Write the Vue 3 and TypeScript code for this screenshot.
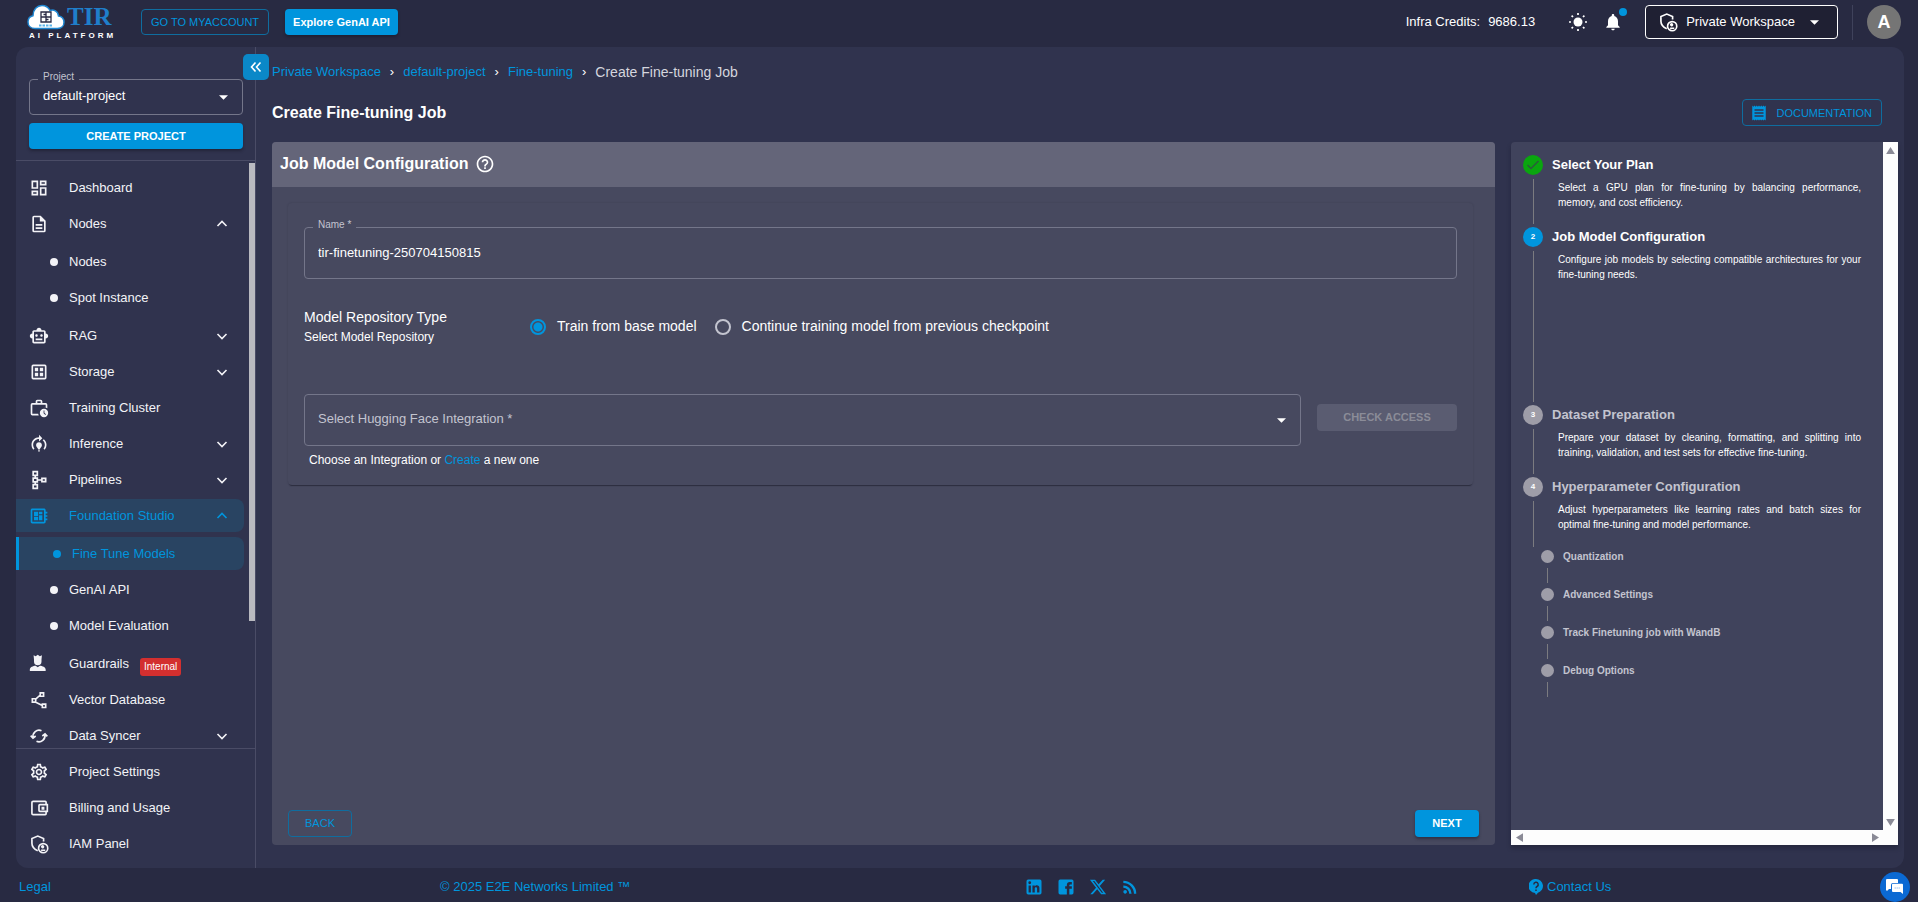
<script setup lang="ts">
import { ref } from 'vue'

interface Icon {
  d: string
  stroke?: boolean
}

interface NavItem {
  label: string
  icon: string
  expandable?: boolean
  open?: boolean
  active?: boolean
  badge?: string
  children?: { label: string; active?: boolean }[]
}

const icons: Record<string, Icon> = {
  dashboard: { d: 'M19 5v2h-4V5h4M9 5v6H5V5h4m10 8v6h-4v-6h4M9 17v2H5v-2h4M21 3h-8v6h8V3M11 3H3v10h8V3m10 8h-8v10h8V11m-10 4H3v6h8v-6z' },
  file: { d: 'M6 2a2 2 0 0 0-2 2v16a2 2 0 0 0 2 2h12a2 2 0 0 0 2-2V8l-6-6H6m0 2h7v5h5v11H6V4m2 8v2h8v-2H8m0 4v2h8v-2H8z' },
  robot: { d: 'M20 9V7c0-1.1-.9-2-2-2h-3c0-1.66-1.34-3-3-3S9 3.34 9 5H6c-1.1 0-2 .9-2 2v2c-1.66 0-3 1.34-3 3s1.34 3 3 3v4c0 1.1.9 2 2 2h12c1.1 0 2-.9 2-2v-4c1.66 0 3-1.34 3-3s-1.34-3-3-3zm-2 10H6V7h12v12zm-9-6c-.83 0-1.5-.67-1.5-1.5S8.17 10 9 10s1.5.67 1.5 1.5S9.83 13 9 13zm7.5-1.5c0 .83-.67 1.5-1.5 1.5s-1.5-.67-1.5-1.5.67-1.5 1.5-1.5 1.5.67 1.5 1.5zM8 15h8v2H8v-2z' },
  storage: { d: 'M19 3H5a2 2 0 0 0-2 2v14a2 2 0 0 0 2 2h14a2 2 0 0 0 2-2V5a2 2 0 0 0-2-2m0 16H5V5h14v14M7 7h4v4H7V7m6 0h4v4h-4V7m-6 6h4v4H7v-4m6 0h4v4h-4v-4z' },
  cluster: { d: 'M18 11c1.5 0 3 .5 4 1.300V8a2 2 0 0 0-2-2h-4V4a2 2 0 0 0-2-2h-4a2 2 0 0 0-2 2v2H4a2 2 0 0 0-2 2v11a2 2 0 0 0 2 2h7.700a7 7 0 0 1-.700-2H4V8h16v3.300a7 7 0 0 0-2-.300M10 4h4v2h-4V4m8 9a5 5 0 1 0 0 10 5 5 0 0 0 0-10m1.650 7.350L17.500 18.200V15h1v2.790l1.850 1.850-.700.710z' },
  inference: { d: 'M15.500 13.500c0 2-2.500 3.500-2.500 5h-2c0-1.500-2.500-3-2.500-5 0-1.930 1.570-3.500 3.500-3.500s3.500 1.570 3.500 3.500zm-2.500 6h-2V21h2v-1.500zM19 13c0 1.680-.590 3.210-1.580 4.420l1.420 1.420C20.180 17.270 21 15.230 21 13c0-2.740-1.230-5.190-3.160-6.840l-1.420 1.420C17.990 8.860 19 10.820 19 13zm-3-8l-4-4v3c-4.970 0-9 4.030-9 9 0 2.230.820 4.270 2.160 5.840l1.420-1.420C5.590 16.210 5 14.680 5 13c0-3.860 3.140-7 7-7v3l4-4z' },
  pipelines: { d: 'M5 2h5v4.500H5zM5 9.750h5v4.500H5zM5 17.500h5V22H5zM15.500 10h4.500v4h-4.500zM7.500 6.500v3.250M7.500 14.250v3.250M10 12h5.500', stroke: true },
  studio: { d: 'M22 9V7h-2V5c0-1.100-.900-2-2-2H4c-1.100 0-2 .900-2 2v14c0 1.100.900 2 2 2h14c1.100 0 2-.900 2-2v-2h2v-2h-2v-2h2v-2h-2V9h2zm-4 10H4V5h14v14zM6 13h5v4H6zm6-6h4v3h-4zM6 7h5v5H6zm6 4h4v6h-4z' },
  guard: { d: 'M5.500 1.500L8 2.700 10.500 1l2.500 1.700 2.500-1.200-.500 5V9a4.500 4.500 0 0 1-9 0V6.500zM1 20.500v-2c0-2.800 4-4.300 7-4.500l2.500 2 2.500-2c3 .200 7 1.700 7 4.500v2z' },
  vector: { d: 'M13.500 3.500h4v4h-4zM4 10.500h4v4H4zM16 17h4v4h-4zM13.500 6L8 11M7.500 14.500l8.500 4', stroke: true },
  sync: { d: 'M5 14a7.300 7.300 0 0 1 10-8.300M19 10a7.300 7.300 0 0 1-10 8.300M2 11.500L4.800 14.500 8 12M22 12.500l-2.800-3L16 12', stroke: true },
  gear: { d: 'M19.430 12.980c.040-.320.070-.640.070-.980 0-.340-.030-.660-.070-.980l2.110-1.650c.190-.150.240-.420.120-.640l-2-3.460c-.090-.160-.260-.250-.440-.250-.060 0-.120.010-.170.030l-2.490 1c-.520-.400-1.080-.730-1.690-.980l-.380-2.650C14.460 2.180 14.250 2 14 2h-4c-.250 0-.460.180-.490.420l-.380 2.650c-.610.250-1.170.590-1.690.980l-2.490-1c-.060-.020-.120-.030-.180-.030-.170 0-.340.090-.430.250l-2 3.460c-.130.220-.070.490.120.640l2.110 1.650c-.040.320-.070.650-.070.980 0 .330.030.660.070.980l-2.110 1.650c-.190.150-.240.420-.120.640l2 3.460c.090.160.260.250.440.250.060 0 .120-.010.170-.030l2.490-1c.520.400 1.080.730 1.690.980l.380 2.650c.030.240.240.420.490.420h4c.250 0 .460-.180.490-.420l.380-2.650c.610-.250 1.170-.590 1.690-.980l2.490 1c.060.020.120.030.180.030.170 0 .340-.090.430-.250l2-3.460c.120-.220.070-.490-.120-.640l-2.110-1.650zm-1.980-1.710c.040.310.050.520.050.730 0 .210-.020.430-.050.730l-.140 1.130.890.700 1.080.840-.700 1.210-1.270-.510-1.040-.420-.900.680c-.430.320-.840.560-1.250.730l-1.060.430-.160 1.130-.200 1.350h-1.400l-.190-1.350-.160-1.130-1.060-.430c-.430-.180-.830-.410-1.230-.710l-.910-.700-1.060.430-1.270.510-.700-1.210 1.080-.840.890-.700-.140-1.130c-.030-.310-.050-.540-.050-.740s.020-.430.050-.730l.140-1.130-.890-.700-1.080-.840.700-1.210 1.270.510 1.040.420.900-.680c.430-.320.840-.560 1.250-.730l1.060-.430.160-1.130.200-1.350h1.390l.190 1.350.160 1.130 1.060.430c.430.180.830.410 1.230.710l.910.700 1.060-.430 1.270-.510.700 1.210-1.070.850-.890.700.140 1.130zM12 8c-2.210 0-4 1.790-4 4s1.790 4 4 4 4-1.790 4-4-1.790-4-4-4zm0 6c-1.100 0-2-.900-2-2s.900-2 2-2 2 .900 2 2-.900 2-2 2z' },
  wallet: { d: 'M20.500 7V5a1 1 0 0 0-1-1H5a1.500 1.500 0 0 0-1.500 1.500v13A1.500 1.500 0 0 0 5 20h14.500a1 1 0 0 0 1-1v-2M13 8h9v8h-9a1 1 0 0 1-1-1V9a1 1 0 0 1 1-1zM16 11.500h1.500v1.500H16z', stroke: true },
  shield: { d: 'M10.500 20C6 18 3.500 14.500 3.500 11V5.500L10.500 2.500l7 3V9M17 11.500a5.500 5.500 0 1 0 0 11 5.500 5.500 0 0 0 0-11zM17 14.500a1 1 0 1 0 0 1.500 1 1 0 0 0 0-1.500zM14.500 19.500h5', stroke: true },
}

const nav: NavItem[] = [
  { label: 'Dashboard', icon: 'dashboard' },
  { label: 'Nodes', icon: 'file', expandable: true, open: true, children: [{ label: 'Nodes' }, { label: 'Spot Instance' }] },
  { label: 'RAG', icon: 'robot', expandable: true },
  { label: 'Storage', icon: 'storage', expandable: true },
  { label: 'Training Cluster', icon: 'cluster' },
  { label: 'Inference', icon: 'inference', expandable: true },
  { label: 'Pipelines', icon: 'pipelines', expandable: true },
  {
    label: 'Foundation Studio', icon: 'studio', expandable: true, open: true, active: true,
    children: [{ label: 'Fine Tune Models', active: true }, { label: 'GenAI API' }, { label: 'Model Evaluation' }],
  },
  { label: 'Guardrails', icon: 'guard', badge: 'Internal' },
  { label: 'Vector Database', icon: 'vector' },
  { label: 'Data Syncer', icon: 'sync', expandable: true },
]

const bottomNav: NavItem[] = [
  { label: 'Project Settings', icon: 'gear' },
  { label: 'Billing and Usage', icon: 'wallet' },
  { label: 'IAM Panel', icon: 'shield' },
]

const steps = [
  { title: 'Select Your Plan', text: 'Select a GPU plan for fine-tuning by balancing performance, memory, and cost efficiency.', state: 'done' },
  { title: 'Job Model Configuration', text: 'Configure job models by selecting compatible architectures for your fine-tuning needs.', state: 'current' },
  { title: 'Dataset Preparation', text: 'Prepare your dataset by cleaning, formatting, and splitting into training, validation, and test sets for effective fine-tuning.', state: 'todo' },
  { title: 'Hyperparameter Configuration', text: 'Adjust hyperparameters like learning rates and batch sizes for optimal fine-tuning and model performance.', state: 'todo' },
]
const subSteps = ['Quantization', 'Advanced Settings', 'Track Finetuning job with WandB', 'Debug Options']

const socials = [
  { name: 'LinkedIn', d: 'M19 3a2 2 0 0 1 2 2v14a2 2 0 0 1-2 2H5a2 2 0 0 1-2-2V5a2 2 0 0 1 2-2h14m-.500 15.500v-5.300a3.260 3.260 0 0 0-3.260-3.260c-.850 0-1.840.520-2.320 1.300v-1.110h-2.790v8.370h2.790v-4.930c0-.770.620-1.400 1.390-1.400a1.400 1.400 0 0 1 1.400 1.400v4.930h2.790M6.880 8.560a1.680 1.680 0 0 0 1.680-1.680c0-.930-.750-1.690-1.680-1.690a1.690 1.690 0 0 0-1.690 1.690c0 .930.760 1.680 1.690 1.680m1.390 9.940v-8.370H5.500v8.370h2.770z' },
  { name: 'Facebook', d: 'M19 3H5a2 2 0 0 0-2 2v14a2 2 0 0 0 2 2h8v-7h-2v-3h2V9.500C13 7.500 14.300 6 16.500 6H19v3h-2c-.600 0-1 .400-1 1v1h3v3h-3v7h3a2 2 0 0 0 2-2V5a2 2 0 0 0-2-2z' },
  { name: 'X', d: 'M18.244 2.250h3.308l-7.227 8.260 8.502 11.240H16.170l-5.214-6.817L4.990 21.750H1.680l7.730-8.835L1.254 2.250H8.080l4.713 6.231zm-1.161 17.520h1.833L7.084 4.126H5.117z' },
  { name: 'RSS', d: 'M6.180 15.640a2.180 2.180 0 0 1 2.180 2.180C8.360 19 7.380 20 6.180 20 5 20 4 19 4 17.820a2.180 2.180 0 0 1 2.180-2.180M4 4.440A15.560 15.560 0 0 1 19.560 20h-2.830A12.730 12.730 0 0 0 4 7.270V4.440m0 5.660a9.900 9.900 0 0 1 9.900 9.900h-2.830A7.070 7.070 0 0 0 4 12.930V10.100z' },
]

const project = ref('default-project')
const jobName = ref('tir-finetuning-250704150815')
const source = ref('base')
const integration = ref('')
</script>

<template>
  <div class="page">
    <header class="top">
      <a class="logo" href="#" aria-label="TIR AI Platform">
        <span class="logo-row">
          <svg class="cloud" viewBox="0 0 38 26" aria-hidden="true">
            <path d="M8 24.500C3.500 24.500 1 21.500 1 18c0-3.300 2.200-5.800 5-6.300C6 5.500 10 1.500 15 1.500c4 0 6.500 2 8 5 3.500-1.500 8 .500 8.500 5.500 3.500.500 5.500 3 5.500 6.300 0 3.700-2.700 6.200-6.500 6.200z" fill="#fff" stroke="#1f86d0" stroke-width="1.500" />
            <path d="M14 8h10v10H14zM19 8v10M14 13h10M16.500 10.500h2.500M21.500 15.500H19" fill="none" stroke="#2a2b44" stroke-width="1.300" />
            <path d="M12 21.500h14" stroke="#5ab4ea" stroke-width="2" stroke-dasharray="2.500 1" />
          </svg>
          <span class="tir">TIR</span>
        </span>
        <span class="tagline">AI PLATFORM</span>
      </a>
      <button class="btn outline account">GO TO MYACCOUNT</button>
      <button class="btn solid explore">Explore GenAI API</button>
      <div class="top-right">
        <span class="credits">Infra Credits:<span>9686.13</span></span>
        <button class="icon-btn" aria-label="Toggle theme">
          <svg viewBox="0 0 20 20" width="20" height="20"><circle cx="10" cy="10" r="4.500" fill="currentColor" /><path d="M10 1v2M10 17v2M1 10h2M17 10h2M3.600 3.600l1.400 1.400M15 15l1.400 1.400M3.600 16.400L5 15M15 5l1.400-1.400" stroke="currentColor" stroke-width="1.700" /></svg>
        </button>
        <button class="icon-btn bell" aria-label="Notifications">
          <svg viewBox="0 0 24 24" width="20" height="20"><path fill="currentColor" d="M12 22c1.100 0 2-.900 2-2h-4c0 1.100.890 2 2 2zm6-6v-5c0-3.070-1.640-5.640-4.500-6.320V4c0-.830-.670-1.500-1.500-1.500s-1.500.670-1.500 1.500v.680C7.630 5.360 6 7.920 6 11v5l-2 2v1h16v-1l-2-2z" /></svg>
          <span class="dot"></span>
        </button>
        <button class="workspace">
          <svg class="ico stroke" viewBox="0 0 24 24" width="20" height="20"><path :d="icons.shield.d" /></svg>
          <span>Private Workspace</span>
          <svg viewBox="0 0 10 5" width="9" height="5"><path d="M0 0h10L5 5z" fill="currentColor" /></svg>
        </button>
        <span class="vbar"></span>
        <button class="avatar">A</button>
      </div>
    </header>

    <div class="shell">
      <aside class="side">
        <div class="side-top">
          <div class="field project">
            <label for="project">Project</label>
            <select id="project" v-model="project"><option>default-project</option></select>
            <svg class="caret" viewBox="0 0 10 5" width="9" height="5"><path d="M0 0h10L5 5z" fill="currentColor" /></svg>
          </div>
          <button class="btn solid">CREATE PROJECT</button>
        </div>
        <button class="collapse" aria-label="Collapse sidebar">
          <svg viewBox="0 0 12 12" width="12" height="12"><path d="M5.500 1.500L1.500 6l4 4.500M10.500 1.500L6.500 6l4 4.500" fill="none" stroke="currentColor" stroke-width="1.600" /></svg>
        </button>
        <nav class="nav">
          <span class="thumb"></span>
          <template v-for="item in nav" :key="item.label">
            <a href="#" class="item" :class="{ active: item.active }">
              <svg class="ico" :class="{ stroke: icons[item.icon].stroke }" viewBox="0 0 24 24" width="20" height="20"><path :d="icons[item.icon].d" /></svg>
              <span>{{ item.label }}</span>
              <span v-if="item.badge" class="badge">{{ item.badge }}</span>
              <svg v-if="item.expandable" class="chev" viewBox="0 0 12 12" width="12" height="12"><path :d="item.open ? 'M1.500 8L6 3.500l4.500 4.500' : 'M1.500 4L6 8.500 10.500 4'" /></svg>
            </a>
            <div v-if="item.children" class="group">
              <a v-for="child in item.children" :key="child.label" href="#" class="item child" :class="{ active: child.active }">
                <i></i><span>{{ child.label }}</span>
              </a>
            </div>
          </template>
        </nav>
        <nav class="nav-bottom">
          <a v-for="item in bottomNav" :key="item.label" href="#" class="item">
            <svg class="ico" :class="{ stroke: icons[item.icon].stroke }" viewBox="0 0 24 24" width="20" height="20"><path :d="icons[item.icon].d" /></svg>
            <span>{{ item.label }}</span>
          </a>
        </nav>
      </aside>

      <main class="main">
        <div class="crumbs">
          <a href="#">Private Workspace</a><b>›</b><a href="#">default-project</a><b>›</b><a href="#">Fine-tuning</a><b>›</b><span>Create Fine-tuning Job</span>
        </div>
        <div class="title-row">
          <h1>Create Fine-tuning Job</h1>
          <button class="btn outline doc">
            <svg viewBox="0 0 24 24" width="18" height="18"><path fill="currentColor" d="M18 17H6v-2h12v2zm0-4H6v-2h12v2zm0-4H6V7h12v2zM3 22l1.500-1.500L6 22l1.500-1.500L9 22l1.500-1.500L12 22l1.500-1.500L15 22l1.500-1.500L18 22l1.500-1.500L21 22V2l-1.500 1.500L18 2l-1.500 1.500L15 2l-1.500 1.500L12 2l-1.500 1.500L9 2 7.500 3.500 6 2 4.500 3.500 3 2v20z" /></svg>
            DOCUMENTATION
          </button>
        </div>
        <div class="columns">
          <section class="panel">
            <div class="panel-head">
              <h2>Job Model Configuration</h2>
              <svg viewBox="0 0 24 24" width="20" height="20"><path fill="currentColor" d="M11 18h2v-2h-2v2zm1-16C6.480 2 2 6.480 2 12s4.480 10 10 10 10-4.480 10-10S17.520 2 12 2zm0 18c-4.410 0-8-3.590-8-8s3.590-8 8-8 8 3.590 8 8-3.590 8-8 8zm0-14c-2.210 0-4 1.790-4 4h2c0-1.100.900-2 2-2s2 .900 2 2c0 2-3 1.750-3 5h2c0-2.250 3-2.500 3-5 0-2.210-1.790-4-4-4z" /></svg>
            </div>
            <div class="card">
              <div class="field name">
                <label for="job-name">Name *</label>
                <input id="job-name" v-model="jobName" type="text" />
              </div>
              <div class="repo">
                <div class="repo-label">
                  <span>Model Repository Type</span>
                  <small>Select Model Repository</small>
                </div>
                <label class="radio"><input v-model="source" type="radio" name="source" value="base" /><span>Train from base model</span></label>
                <label class="radio"><input v-model="source" type="radio" name="source" value="checkpoint" /><span>Continue training model from previous checkpoint</span></label>
              </div>
              <div class="integration">
                <div class="field">
                  <select id="integration" v-model="integration" aria-label="Select Hugging Face Integration" class="empty">
                    <option value="">Select Hugging Face Integration *</option>
                  </select>
                  <svg class="caret" viewBox="0 0 10 5" width="9" height="5"><path d="M0 0h10L5 5z" fill="currentColor" /></svg>
                </div>
                <button class="btn check" disabled>CHECK ACCESS</button>
              </div>
              <p class="hint">Choose an Integration or <a href="#">Create</a> a new one</p>
            </div>
            <div class="actions">
              <button class="btn outline">BACK</button>
              <button class="btn solid">NEXT</button>
            </div>
          </section>

          <aside class="stepper">
            <div class="steps">
              <div v-for="(step, i) in steps" :key="step.title" class="step" :class="step.state">
                <div class="rail">
                  <span class="num">
                    <svg v-if="step.state === 'done'" viewBox="0 0 20 20" width="20" height="20"><path d="M4.500 10l3.500 3.500 7.500-7.500" fill="none" stroke="#2b5c3c" stroke-width="1.500" /></svg>
                    <template v-else>{{ i + 1 }}</template>
                  </span>
                  <span class="line"></span>
                </div>
                <div class="step-body">
                  <h3>{{ step.title }}</h3>
                  <p>{{ step.text }}</p>
                </div>
              </div>
              <div v-for="sub in subSteps" :key="sub" class="sub">
                <div class="rail"><span class="num"></span><span class="line"></span></div>
                <span class="sub-title">{{ sub }}</span>
              </div>
            </div>
            <div class="vscroll">
              <svg viewBox="0 0 10 8" width="9" height="7"><path d="M5 0l5 8H0z" /></svg>
              <svg viewBox="0 0 10 8" width="9" height="7"><path d="M0 0h10L5 8z" /></svg>
            </div>
            <div class="hscroll">
              <svg viewBox="0 0 8 10" width="7" height="9"><path d="M8 0v10L0 5z" /></svg>
              <svg viewBox="0 0 8 10" width="7" height="9"><path d="M0 0l8 5-8 5z" /></svg>
            </div>
          </aside>
        </div>
      </main>
    </div>

    <footer class="foot">
      <a href="#">Legal</a>
      <span>© 2025 E2E Networks Limited ™</span>
      <div class="social">
        <a v-for="s in socials" :key="s.name" href="#" :aria-label="s.name"><svg viewBox="0 0 24 24" width="20" height="20" :class="{ small: s.name === 'X' }"><path :d="s.d" fill="currentColor" /></svg></a>
      </div>
      <a href="#" class="contact">
        <svg viewBox="0 0 14 16" width="14" height="16"><path d="M7 0a7 7 0 0 1 2 13.700L7 16l-1-2A7 7 0 0 1 7 0z" fill="currentColor" /><path d="M4.800 5.500a2.200 2.200 0 1 1 3.200 2C7.200 8 7 8.300 7 9.200M7 10.500V12" fill="none" stroke="#282a42" stroke-width="1.500" /></svg>
        Contact Us
      </a>
      <button class="chat" aria-label="Open chat">
        <svg viewBox="0 0 18 16" width="18" height="16"><path d="M1 0h10a1 1 0 0 1 1 1v3H7a2 2 0 0 0-2 2v4H3l-2 2-1-1V1a1 1 0 0 1 1-1z" fill="#fff" /><path d="M7 4.800h9a1 1 0 0 1 1 1V15l-2.500-2H7a1 1 0 0 1-1-1V5.800a1 1 0 0 1 1-1z" fill="#fff" /><path d="M8.500 9h6" stroke="#9cc3f0" stroke-width="1" stroke-dasharray="1.500 .500" /></svg>
      </button>
    </footer>
  </div>
</template>

<style>
body {
  background: #282a42;
}
</style>

<style scoped>
* {
  box-sizing: border-box;
}
.page {
  display: flex;
  flex-direction: column;
  height: 100vh;
  background: #282a42;
  color: #fff;
  font: 13px/16px "Liberation Sans", Arial, sans-serif;
}
a {
  color: #0095dd;
  text-decoration: none;
}
button {
  font: inherit;
  color: inherit;
  border: 0;
  background: none;
  padding: 0;
  cursor: pointer;
}
h1, h2, h3, p {
  margin: 0;
}

.btn {
  display: inline-flex;
  align-items: center;
  justify-content: center;
  height: 27px;
  padding: 0 8px 1px;
  border-radius: 4px;
  font-size: 11px;
  line-height: 16px;
  white-space: nowrap;
}
.solid {
  background: #0095dd;
  color: #fff;
  font-weight: 700;
  box-shadow: 0 2px 3px rgba(20, 21, 33, 0.45);
}
.outline {
  border: 1px solid #0f6d9f;
  color: #0095dd;
}

.top {
  display: flex;
  align-items: center;
  flex: none;
  height: 47px;
  padding: 0 17px 3px 27px;
}
.logo {
  display: flex;
  flex-direction: column;
  width: 92px;
  margin-right: 22px;
}
.logo-row {
  display: flex;
  align-items: center;
}
.cloud {
  width: 38px;
  height: 26px;
}
.tir {
  margin-left: 2px;
  font: 700 25px/26px "Liberation Serif", "Times New Roman", serif;
  color: #1f7fcb;
}
.tagline {
  margin-top: 2px;
  padding-left: 2px;
  font-size: 8px;
  font-weight: 700;
  line-height: 8px;
  letter-spacing: 3px;
  white-space: nowrap;
  color: #fff;
}
.account,
.explore {
  height: 26px;
}
.account {
  margin-right: 16px;
  width: 128px;
}
.explore {
  width: 113px;
}
.top-right {
  display: flex;
  align-items: center;
  margin-left: auto;
}
.credits {
  display: flex;
  gap: 8px;
  margin-right: 33px;
}
.icon-btn {
  position: relative;
  display: flex;
}
.bell {
  margin: 0 22px 0 15px;
}
.dot {
  position: absolute;
  top: -4px;
  right: -4px;
  width: 8px;
  height: 8px;
  border-radius: 50%;
  background: #0095dd;
}
.workspace {
  display: flex;
  align-items: center;
  height: 34px;
  padding: 0 18px 0 12px;
  border: 1px solid #fff;
  border-radius: 4px;
  background: #1f2033;
}
.workspace span {
  margin: 0 15px 0 8px;
}
.vbar {
  width: 1px;
  height: 35px;
  margin: 0 14px;
  background: #3f425b;
}
.avatar {
  width: 34px;
  height: 34px;
  border-radius: 50%;
  background: #757575;
  font-size: 18px;
  font-weight: 700;
}

.shell {
  display: flex;
  flex: 1;
  min-height: 0;
  margin: 0 14px 0 16px;
  border-radius: 12px;
  background: #30334e;
}
.side {
  position: relative;
  display: flex;
  flex-direction: column;
  flex: none;
  width: 240px;
  border-right: 1px solid #4a4c66;
}
.side-top {
  display: flex;
  flex-direction: column;
  gap: 8px;
  padding: 32px 12px 11px 13px;
  border-bottom: 1px solid #4a4c66;
}
.field {
  position: relative;
  color: #fff;
}
.field input,
.field select {
  display: block;
  width: 100%;
  height: 52px;
  padding: 0 13px 2px;
  border: 1px solid #74768a;
  border-radius: 4px;
  background: transparent;
  color: inherit;
  font: inherit;
  appearance: none;
  outline: none;
}
.field label {
  position: absolute;
  top: -8px;
  left: 9px;
  padding: 0 5px;
  font-size: 10px;
  line-height: 12px;
  color: #c3c4cf;
}
.field .caret {
  position: absolute;
  right: 15px;
  top: 50%;
  margin-top: -2px;
  pointer-events: none;
}
.project select {
  height: 36px;
}
.project label {
  background: #30334e;
}
.side-top .btn {
  height: 26px;
}
.collapse {
  position: absolute;
  top: 7px;
  right: -14px;
  display: flex;
  align-items: center;
  justify-content: center;
  width: 26px;
  height: 26px;
  border-radius: 5px;
  background: #0a88c8;
}
.nav {
  position: relative;
  flex: 1;
  min-height: 0;
  overflow: hidden;
  padding-top: 10px;
}
.thumb {
  position: absolute;
  top: 2px;
  right: 0;
  width: 6px;
  height: 78%;
  background: #b9bac0;
}
.item {
  display: flex;
  align-items: center;
  height: 33px;
  margin: 0 11px 3px 0;
  padding: 0 16px 0 13px;
  border-radius: 0 8px 8px 0;
  color: #f3f3f7;
}
.item .ico {
  flex: none;
  margin-right: 20px;
}
.ico {
  fill: currentColor;
}
.ico.stroke {
  fill: none;
  stroke: currentColor;
  stroke-width: 2;
}
.chev {
  margin-left: auto;
  fill: none;
  stroke: currentColor;
  stroke-width: 1.6;
}
.item.active {
  background: #294462;
  color: #0095dd;
}
.badge {
  margin: 6px 0 0 11px;
  padding: 0 4px;
  border-radius: 3px;
  background: #d32f2f;
  color: #fff;
  font-size: 10px;
  line-height: 18px;
}
.group {
  padding: 2px 0;
}
.child {
  padding-left: 34px;
}
.child i {
  width: 8px;
  height: 8px;
  margin-right: 11px;
  border-radius: 50%;
  background: currentColor;
}
.child.active {
  border-left: 3px solid #0095dd;
}
.nav-bottom {
  flex: none;
  padding: 6px 0 5px;
  border-top: 1px solid #4a4c66;
}

.main {
  display: flex;
  flex-direction: column;
  flex: 1;
  min-width: 0;
  padding: 17px 6px 23px 16px;
}
.crumbs {
  display: flex;
  font-size: 13px;
}
.crumbs b {
  margin: 0 9px;
  font-weight: 400;
}
.crumbs span {
  font-size: 14px;
  color: #d5d6de;
}
.title-row {
  display: flex;
  align-items: center;
  justify-content: space-between;
  margin: 19px 16px 16px 0;
}
h1,
h2 {
  font-size: 16px;
  line-height: 20px;
  font-weight: 700;
}
.doc {
  gap: 8px;
  padding: 0 9px 0 7px;
}
.columns {
  display: flex;
  flex: 1;
  min-height: 0;
  gap: 16px;
}
.panel {
  display: flex;
  flex-direction: column;
  flex: 1;
  min-width: 0;
  border-radius: 4px;
  background: #47495f;
}
.panel-head {
  display: flex;
  align-items: center;
  gap: 7px;
  height: 45px;
  padding: 0 8px 1px;
  border-radius: 4px 4px 0 0;
  background: #646579;
}
.card {
  margin: 16px 22px 0 16px;
  padding: 24px 16px 17px;
  border-radius: 4px;
  box-shadow: 0 2px 1px -1px rgba(20, 21, 33, 0.5), 0 0 2px rgba(20, 21, 33, 0.2);
}
.name label {
  background: #47495f;
}
.repo {
  display: flex;
  align-items: center;
  gap: 16px;
  margin-top: 28px;
  font-size: 14px;
}
.repo-label {
  width: 210px;
}
.repo-label span,
.repo-label small {
  display: block;
  line-height: 20px;
}
.repo-label small {
  font-size: 12px;
}
.radio {
  display: flex;
  align-items: center;
}
.radio span {
  padding: 0 2px 2px 0;
}
.radio input {
  appearance: none;
  width: 16px;
  height: 16px;
  margin: 0 11px 0 0;
  border: 2px solid #c3c4cf;
  border-radius: 50%;
}
.radio input:checked {
  border-color: #0095dd;
  background: radial-gradient(circle, #0095dd 4px, transparent 5px);
}
.integration {
  display: flex;
  align-items: center;
  gap: 16px;
  margin-top: 47px;
}
.integration .field {
  flex: 1;
}
.integration .empty {
  color: #c3c4cf;
}
.check {
  width: 140px;
  margin-bottom: 5px;
  background: #5a5c71;
  color: #8b8c98;
  font-weight: 700;
  cursor: default;
}
.hint {
  margin: 6px 5px 0;
  font-size: 12px;
}
.actions {
  display: flex;
  justify-content: space-between;
  margin: auto 16px 8px;
}
.actions .btn {
  width: 64px;
}

.stepper {
  display: grid;
  grid-template: 1fr 15px / 1fr 15px;
  flex: none;
  width: 387px;
  border-radius: 4px 0 0 0;
  background: #40435c;
  box-shadow: 0 3px 4px rgba(20, 21, 33, 0.35);
}
.steps {
  padding: 13px 22px 0 12px;
}
.step {
  display: flex;
  gap: 9px;
  height: 72px;
}
.step.current {
  height: 178px;
}
.step:nth-child(4) {
  height: 73px;
}
.rail {
  display: flex;
  flex-direction: column;
  align-items: center;
}
.num {
  display: flex;
  align-items: center;
  justify-content: center;
  flex: none;
  width: 20px;
  height: 20px;
  border-radius: 50%;
  background: #9e9da8;
  font-size: 8px;
  font-weight: 700;
}
.done .num {
  background: #0aa60f;
}
.current .num {
  background: #0095dd;
}
.line {
  flex: 1;
  width: 1px;
  margin: 4px 0 3px;
  background: #7b7b80;
}
.step-body {
  flex: 1;
}
h3 {
  font-size: 13px;
  line-height: 20px;
  font-weight: 700;
}
.todo h3,
.sub-title {
  color: #c3c4cf;
}
.step p {
  margin: 5px 0 0 6px;
  font-size: 10px;
  line-height: 15px;
  text-align: justify;
}
.sub {
  display: flex;
  gap: 9px;
  height: 38px;
  padding-left: 18px;
}
.sub .num {
  width: 13px;
  height: 13px;
}
.sub .line {
  margin: 5px 0;
}
.sub-title {
  font-size: 10px;
  line-height: 13px;
  font-weight: 700;
}
.vscroll,
.hscroll {
  display: flex;
  align-items: center;
  justify-content: space-between;
  background: #fdfdfd;
  fill: #8a8a96;
}
.vscroll {
  flex-direction: column;
  padding: 5px 0 4px;
}
.hscroll {
  grid-column: 1 / 3;
  padding: 0 19px 0 5px;
}

.foot {
  position: relative;
  display: grid;
  grid-template-columns: 421fr 586fr 503fr 389fr;
  align-items: center;
  flex: none;
  height: 34px;
  padding: 3px 0 0 19px;
  color: #0095dd;
}
.social {
  display: flex;
  gap: 12px;
  margin-left: -2px;
}
.social a,
.contact {
  display: flex;
  align-items: center;
}
.social .small {
  padding: 1px;
}
.contact {
  gap: 4px;
}
.chat {
  position: absolute;
  right: 8px;
  top: 4px;
  display: flex;
  align-items: center;
  justify-content: center;
  width: 30px;
  height: 30px;
  border-radius: 50%;
  background: #0b69d3;
}
</style>
